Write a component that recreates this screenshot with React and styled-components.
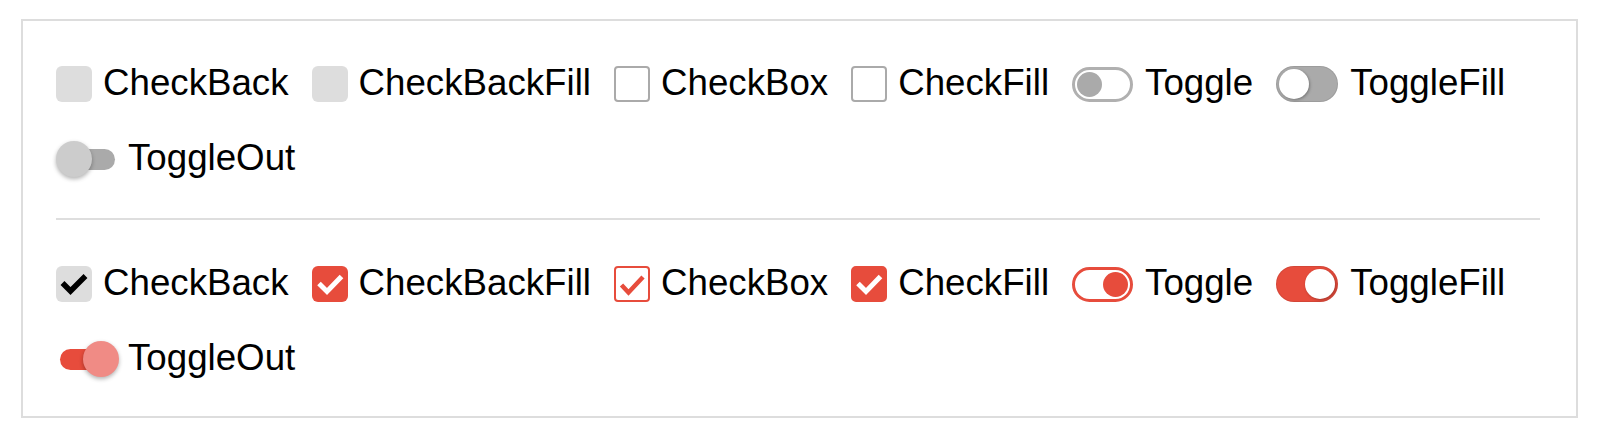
import React from 'react';
import styled, { createGlobalStyle, css } from 'styled-components';

const RED = '#e74c3c';

const GlobalStyle = createGlobalStyle`
    body {
        margin: 0;
        background: #fff;
        font-family: "Liberation Sans", Arial, sans-serif;
        color: #000;
    }
`;

const items = [
    { kind: 'check', variant: 'back', label: 'CheckBack' },
    { kind: 'check', variant: 'backFill', label: 'CheckBackFill' },
    { kind: 'check', variant: 'box', label: 'CheckBox' },
    { kind: 'check', variant: 'fill', label: 'CheckFill' },
    { kind: 'switch', variant: 'toggle', label: 'Toggle' },
    { kind: 'switch', variant: 'toggleFill', label: 'ToggleFill' },
    { kind: 'switch', variant: 'toggleOut', label: 'ToggleOut' },
];

// gap between control and its label
const gaps = { toggle: 12, toggleFill: 12, toggleOut: 9 };

const CheckMark = ({ color, width, points }) => (
    <svg width="36" height="36" viewBox="0 0 36 36">
        <polyline
            points={points}
            fill="none"
            stroke={color}
            strokeWidth={width}
            strokeLinecap="butt"
            strokeLinejoin="miter"
        />
    </svg>
);

const Check = ({ variant, checked }) => {
    let mark = null;
    if (checked) {
        if (variant === 'back') mark = <CheckMark color="#000" width={5.5} points="6.5,17 14.5,25 29.5,10" />;
        else if (variant === 'box') mark = <CheckMark color={RED} width={4.5} points="7.5,19 14.5,26.5 29,11" />;
        else mark = <CheckMark color="#fff" width={5} points="7,17.5 15,25.5 29.5,10.5" />;
    }
    return <Box $variant={variant} $checked={checked}>{mark}</Box>;
};

const Switch = ({ variant, checked }) => {
    if (variant === 'toggle') return <Toggle $on={checked}><ToggleKnob $on={checked} /></Toggle>;
    if (variant === 'toggleFill') return <ToggleFill $on={checked}><FillKnob /></ToggleFill>;
    return <ToggleOut $on={checked}><OutKnob $on={checked} /></ToggleOut>;
};

const ControlRow = ({ checked }) => (
    <Group>
        {items.map((it) => (
            <Item key={it.label} $gap={gaps[it.variant] || 11}>
                {it.kind === 'check'
                    ? <Check variant={it.variant} checked={checked} />
                    : <Switch variant={it.variant} checked={checked} />}
                <Text>{it.label}</Text>
            </Item>
        ))}
    </Group>
);

export default function App() {
    return (
        <>
            <GlobalStyle />
            <Panel>
                <ControlRow checked={false} />
                <Divider />
                <ControlRow checked={true} />
            </Panel>
        </>
    );
}

const Panel = styled.div`
    box-sizing: border-box;
    width: 1557px;
    margin: 19px 0 0 21px;
    border: 2px solid #dddddd;
    padding: 45px 36px 39px 33px;
`;

const Group = styled.div`
    display: flex;
    flex-wrap: wrap;
    column-gap: 23px;
    row-gap: 39px;
`;

const Divider = styled.div`
    height: 2px;
    background: #dedede;
    margin: 41px 0 46px;
`;

const Item = styled.label`
    display: inline-flex;
    align-items: center;
    gap: ${(p) => p.$gap}px;
    height: 36px;
`;

const Text = styled.span`
    font-size: 36.7px;
    line-height: 34px;
    margin-bottom: 2px;
    white-space: nowrap;
`;

const Box = styled.span`
    box-sizing: border-box;
    width: 36px;
    height: 36px;
    flex: none;
    display: flex;
    align-items: center;
    justify-content: center;
    border-radius: 6px;
    background: #dddddd;

    svg {
        flex: none;
    }

    ${(p) => p.$variant === 'backFill' && p.$checked && css`
        background: ${RED};
    `}

    ${(p) => (p.$variant === 'box' || p.$variant === 'fill') && css`
        border-radius: 4px;
        background: #fff;
        border: 2px solid ${p.$checked ? RED : '#aaaaaa'};
        svg { margin: -2px; }
    `}

    ${(p) => p.$variant === 'fill' && p.$checked && css`
        background: ${RED};
        border-radius: 5px;
    `}
`;

const Toggle = styled.span`
    box-sizing: border-box;
    flex: none;
    width: 61px;
    height: 35px;
    border-radius: 18px;
    border: 3px solid ${(p) => (p.$on ? RED : '#b0b0b0')};
    background: #fff;
    padding: 0 2px;
    display: flex;
    align-items: center;
    justify-content: ${(p) => (p.$on ? 'flex-end' : 'flex-start')};
`;

const ToggleKnob = styled.span`
    width: 25px;
    height: 25px;
    border-radius: 50%;
    background: ${(p) => (p.$on ? RED : '#aaaaaa')};
`;

const ToggleFill = styled.span`
    box-sizing: border-box;
    flex: none;
    width: 62px;
    height: 36px;
    border-radius: 18px;
    background: ${(p) => (p.$on ? RED : '#aaaaaa')};
    box-shadow: inset 0 0 0 1px rgba(0, 0, 0, 0.08);
    padding: 0 3px;
    display: flex;
    align-items: center;
    justify-content: ${(p) => (p.$on ? 'flex-end' : 'flex-start')};
`;

const FillKnob = styled.span`
    width: 30px;
    height: 30px;
    border-radius: 50%;
    background: #fff;
    box-shadow: 1px 1px 3px rgba(0, 0, 0, 0.3);
`;

const ToggleOut = styled.span`
    position: relative;
    flex: none;
    width: 63px;
    height: 36px;
    display: flex;
    align-items: center;
    justify-content: ${(p) => (p.$on ? 'flex-end' : 'flex-start')};

    &::before {
        content: '';
        position: absolute;
        left: 4px;
        right: 4px;
        top: 8px;
        height: 21px;
        border-radius: 11px;
        background: ${(p) => (p.$on ? RED : '#aaaaaa')};
    }
`;

const OutKnob = styled.span`
    position: relative;
    width: 36px;
    height: 36px;
    border-radius: 50%;
    background: ${(p) => (p.$on ? '#f08b85' : '#cccccc')};
    box-shadow: 0 2px 4px rgba(0, 0, 0, 0.3);
`;
